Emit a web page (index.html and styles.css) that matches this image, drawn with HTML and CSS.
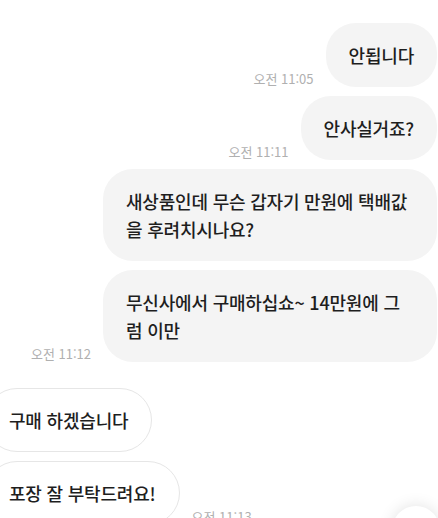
FILE: index.html
```html
<!DOCTYPE html>
<html lang="ko">
<head>
  <meta charset="UTF-8">
  <meta name="viewport" content="width=device-width, initial-scale=1.0">
  <title>채팅</title>
  <link rel="stylesheet" href="styles.css">
</head>
<body>

  <div class="chat">
    <div class="row out">
      <span class="time">오전 11:05</span>
      <div class="bubble">안됩니다</div>
    </div>
    <div class="row out">
      <span class="time">오전 11:11</span>
      <div class="bubble">안사실거죠?</div>
    </div>
    <div class="row out">
      <div class="bubble">새상품인데 무슨 갑자기 만원에 택배값을 후려치시나요?</div>
    </div>
    <div class="row out">
      <span class="time">오전 11:12</span>
      <div class="bubble">무신사에서 구매하십쇼~ 14만원에 그럼 이만</div>
    </div>

    <div class="row in first">
      <div class="bubble">구매 하겠습니다</div>
    </div>
    <div class="row in">
      <div class="bubble">포장 잘 부탁드려요!</div>
      <span class="time">오전 11:13</span>
    </div>
  </div>

  <div class="fab"></div>

</body>
</html>
```

FILE: styles.css
```css
html, body {
  margin: 0;
  height: 100%;
  overflow: hidden;
}
body {
  font-family: "Noto Sans CJK KR", "Noto Sans", sans-serif;
  background: #fff;
  color: #1e1e1e;
  position: relative;
}
.chat {
  padding: 23px 1px 0 0;
}
.row {
  display: flex;
  align-items: flex-end;
  gap: 12px;
  margin-top: 9px;
}
.row:first-child {
  margin-top: 0;
}
.row.out {
  justify-content: flex-end;
}
.row.in {
  margin-left: -15px;
}
.row.first {
  margin-top: 26px;
}
.bubble {
  box-sizing: border-box;
  max-width: 334px;
  padding: 18px 23px;
  font-size: 18px;
  font-weight: 500;
  letter-spacing: -0.2px;
  line-height: 28px;
  border-radius: 30px;
  background: #f4f4f4;
}
.row.in .bubble {
  background: #fff;
  border: 1px solid #e6e6e6;
  padding: 17px 23px;
  border-radius: 32px;
}
.time {
  font-size: 13px;
  line-height: 16px;
  color: #b0b0b0;
  white-space: nowrap;
}
.fab {
  position: absolute;
  left: 392px;
  top: 506px;
  width: 48px;
  height: 48px;
  border-radius: 50%;
  background: #fff;
  box-shadow: 0 0 16px rgba(0,0,0,0.12);
}
```
